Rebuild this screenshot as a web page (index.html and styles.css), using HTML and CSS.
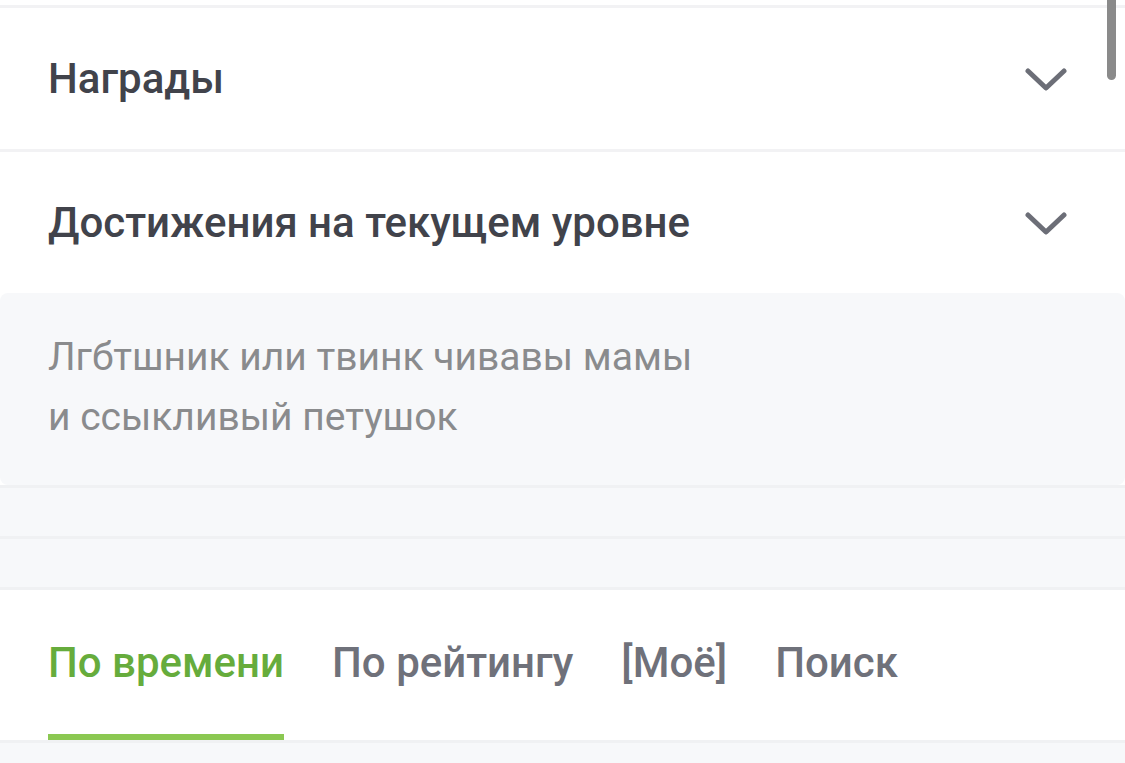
FILE: index.html
```html
<!DOCTYPE html>
<html lang="ru">
<head>
    <meta charset="UTF-8">
    <meta name="viewport" content="width=device-width, initial-scale=1.0">
    <title>Профиль</title>
    <link rel="stylesheet" href="styles.css">
</head>
<body>

    <div class="page">
        <!-- Раскрывающиеся разделы -->
        <div class="section">
            <span class="section-title">Награды</span>
            <svg class="chevron" viewBox="0 0 42 24" width="42" height="24">
                <polyline points="3,3 21,20 39,3" fill="none" stroke="#6c6e77" stroke-width="5" stroke-linecap="round" stroke-linejoin="round"/>
            </svg>
        </div>
        <div class="section">
            <span class="section-title">Достижения на текущем уровне</span>
            <svg class="chevron" viewBox="0 0 42 24" width="42" height="24">
                <polyline points="3,3 21,20 39,3" fill="none" stroke="#6c6e77" stroke-width="5" stroke-linecap="round" stroke-linejoin="round"/>
            </svg>
        </div>

        <div class="note">
            Лгбтшник или твинк чивавы мамы<br>
            и ссыкливый петушок
        </div>

        <div class="band"></div>
        <div class="band"></div>

        <!-- Вкладки комментариев -->
        <div class="tabs">
            <span class="tab active">По времени</span>
            <span class="tab">По рейтингу</span>
            <span class="tab">[Моё]</span>
            <span class="tab">Поиск</span>
        </div>
    </div>

    <div class="scrollbar"></div>

</body>
</html>
```

FILE: styles.css
```css
body {
    margin: 0;
    font-family: Roboto, "Liberation Sans", sans-serif;
    background-color: #f7f8fa;
    height: 763px;
    overflow: hidden;
}
.page {
    padding-top: 5px;
    background-color: #fff;
}
.section {
    display: flex;
    justify-content: space-between;
    align-items: center;
    height: 141px;
    padding: 0 58px 0 48px;
    border-top: 3px solid #f2f2f4;
    background-color: #fff;
}
.section-title {
    font-size: 42px;
    font-weight: 500;
    color: #41434b;
}
.chevron {
    display: block;
    margin-top: 2px;
}
.note {
    background-color: #f7f8fa;
    border-radius: 8px;
    padding: 34px 48px 38px;
    font-size: 39px;
    line-height: 60px;
    color: #8a8b8d;
}
.band {
    height: 48px;
    border-top: 3px solid #f0f1f3;
    background-color: #f7f8fa;
}
.tabs {
    display: flex;
    align-items: flex-end;
    height: 150px;
    padding: 0 48px;
    border-top: 3px solid #f0f1f3;
    border-bottom: 3px solid #f0f1f3;
    background-color: #fff;
}
.tab {
    font-size: 42px;
    font-weight: 500;
    color: #6f717a;
    margin-right: 48px;
    padding-bottom: 47px;
    border-bottom: 6px solid transparent;
}
.tab.active {
    color: #66ac3c;
    border-bottom-color: #8bc852;
}
.scrollbar {
    position: absolute;
    top: 0;
    right: 9px;
    width: 9px;
    height: 80px;
    border-radius: 0 0 5px 5px;
    background-color: #8a8a8a;
}
```
